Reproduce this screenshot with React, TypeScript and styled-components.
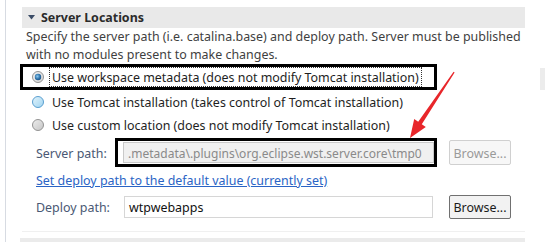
import React from 'react';
import styled, { createGlobalStyle } from 'styled-components';

const Global = createGlobalStyle`
  html, body { margin: 0; padding: 0; background: #fff; }
  body { font-family: "Noto Sans", "Open Sans", sans-serif; font-size: 12.45px; color: #222; }
  * { box-sizing: border-box; }
`;

const Page = styled.div`
  position: relative;
  width: 545px;
  height: 242px;
  overflow: hidden;
  display: flex;
  align-items: flex-start;
  background: #fff;
`;

const Gutter = styled.div`
  flex: none;
  width: 6px;
  height: 242px;
  border-right: 1px solid #d7dbe2;
`;

const Main = styled.div`
  flex: none;
  width: 519px;
  padding: 7px 0 0 16px;
  display: flex;
  flex-direction: column;
  & > * { flex: none; }
`;

const RightCol = styled.div`
  flex: 1;
  padding: 68px 0 0 15px;
`;

const SideBlock = styled.div`
  width: 5px;
  height: 22px;
  background: #ececec;
`;

const Header = styled.div`
  height: 21px;
  background: #e9e9e9;
  display: flex;
  align-items: center;
  gap: 6px;
  padding-left: 6px;
  font-weight: 700;
  color: #2b2b2b;
`;

const Description = styled.div`
  padding-left: 4px;
  line-height: 18px;
  color: #3f3f3f;
`;

const FocusFrame = styled.div`
  margin-left: -2px;
  width: 417px;
  height: 26px;
  border: 3px solid #000;
  display: flex;
  align-items: center;
  padding-left: 9px;
`;

const RadioRow = styled.div`
  height: 23px;
  display: flex;
  align-items: center;
  padding-left: 10px;
`;

const RadioLabel = styled.span<{ $focused?: boolean }>`
  margin-left: 5px;
  padding: 1px 2px 0;
  line-height: 17px;
  border: 1px dotted ${p => (p.$focused ? '#333' : 'transparent')};
  color: #1e1e1e;
  white-space: nowrap;
`;

const FieldRow = styled.div<{ $h: number; $mt?: number }>`
  height: ${p => p.$h}px;
  margin-top: ${p => p.$mt ?? 0}px;
  display: flex;
  align-items: center;
  padding-left: 14px;
`;

const FieldLabel = styled.span`
  width: 79px;
  flex: none;
  padding-top: 1px;
  color: #4a5874;
`;

const MarkFrame = styled.div`
  width: 322px;
  height: 29px;
  border: 3px solid #000;
  padding: 1px 0 1px 5px;
  display: flex;
`;

const TextBox = styled.div<{ $disabled?: boolean; $w?: number; $ml?: number }>`
  width: ${p => (p.$w ? `${p.$w}px` : '100%')};
  height: ${p => (p.$disabled ? '100%' : '22px')};
  margin-left: ${p => p.$ml ?? 0}px;
  border: 1px solid ${p => (p.$disabled ? '#c9c9c9' : '#d6d6d6')};
  background: ${p => (p.$disabled ? '#f0f0f0' : '#fff')};
  color: ${p => (p.$disabled ? '#8a8a8a' : '#111')};
  font-size: ${p => (p.$disabled ? '12px' : '12.45px')};
  display: flex;
  align-items: center;
  padding: 1px 0 0 4px;
  white-space: nowrap;
  overflow: hidden;
`;

const Button = styled.div<{ $disabled?: boolean; $ml: number }>`
  margin-left: ${p => p.$ml}px;
  width: 62px;
  height: ${p => (p.$disabled ? 25 : 24)}px;
  border: 1px solid ${p => (p.$disabled ? '#d0d0d0' : '#707070')};
  border-radius: 2px;
  background: ${p => (p.$disabled ? '#f7f7f7' : '#f2f2f2')};
  color: ${p => (p.$disabled ? '#9a9a9a' : '#1a1a1a')};
  display: flex;
  align-items: center;
  justify-content: center;
  padding-top: 1px;
`;

const LinkRow = styled.div`
  height: 20px;
  margin-top: 3px;
  display: flex;
  align-items: center;
  padding: 1px 0 0 14px;
`;

const Link = styled.a`
  color: #2a64c5;
  text-decoration: underline;
  cursor: pointer;
`;

const Divider = styled.div`
  margin-top: 11px;
  height: 1px;
  background: #f0f0f0;
`;

const FooterBand = styled.div`
  margin: 6px 0 0 -2px;
  height: 10px;
  background: #ebebeb;
`;

const ArrowOverlay = styled.svg`
  position: absolute;
  left: 0;
  top: 0;
  pointer-events: none;
`;

type RadioKind = 'selected' | 'hover' | 'plain';

const Radio: React.FC<{ kind: RadioKind }> = ({ kind }) => (
  <svg width="12" height="12" viewBox="0 0 12 12" style={{ flex: 'none' }}>
    <defs>
      <linearGradient id={`rg-${kind}`} x1="0" y1="0" x2="1" y2="1">
        {kind === 'hover' ? (
          <>
            <stop offset="0" stopColor="#e3f4fc" />
            <stop offset="1" stopColor="#9fd3f0" />
          </>
        ) : kind === 'plain' ? (
          <>
            <stop offset="0" stopColor="#eeeeee" />
            <stop offset="1" stopColor="#c4c4c4" />
          </>
        ) : (
          <>
            <stop offset="0" stopColor="#f4f4f4" />
            <stop offset="1" stopColor="#d4d4d4" />
          </>
        )}
      </linearGradient>
      <radialGradient id="dot" cx="0.4" cy="0.4" r="0.7">
        <stop offset="0" stopColor="#8cc8ee" />
        <stop offset="0.6" stopColor="#2a6fa8" />
        <stop offset="1" stopColor="#1d4b78" />
      </radialGradient>
    </defs>
    <circle
      cx="6"
      cy="6"
      r="5.5"
      fill={`url(#rg-${kind})`}
      stroke={kind === 'hover' ? '#5a9fcf' : '#939393'}
      strokeWidth="1"
    />
    {kind === 'selected' && <circle cx="6" cy="6" r="3.2" fill="url(#dot)" />}
  </svg>
);

const Triangle = () => (
  <svg width="7" height="5" viewBox="0 0 7 5">
    <path d="M0 0 L7 0 L3.5 4.5 Z" fill="#3b4c66" />
  </svg>
);

export default function App() {
  return (
    <>
      <Global />
      <Page>
        <Gutter />
        <Main>
          <Header>
            <Triangle />
            <span>Server Locations</span>
          </Header>
          <Description>
            Specify the server path (i.e. catalina.base) and deploy path. Server must be published
            <br />
            with no modules present to make changes.
          </Description>
          <FocusFrame>
            <Radio kind="selected" />
            <RadioLabel $focused>Use workspace metadata (does not modify Tomcat installation)</RadioLabel>
          </FocusFrame>
          <RadioRow>
            <Radio kind="hover" />
            <RadioLabel>Use Tomcat installation (takes control of Tomcat installation)</RadioLabel>
          </RadioRow>
          <RadioRow>
            <Radio kind="plain" />
            <RadioLabel>Use custom location (does not modify Tomcat installation)</RadioLabel>
          </RadioRow>
          <FieldRow $h={29} $mt={2}>
            <FieldLabel>Server path:</FieldLabel>
            <MarkFrame>
              <TextBox $disabled>.metadata\.plugins\org.eclipse.wst.server.core\tmp0</TextBox>
            </MarkFrame>
            <Button $disabled $ml={12}>Browse...</Button>
          </FieldRow>
          <LinkRow>
            <Link>Set deploy path to the default value (currently set)</Link>
          </LinkRow>
          <FieldRow $h={26} $mt={4}>
            <FieldLabel>Deploy path:</FieldLabel>
            <TextBox $w={309} $ml={9}>wtpwebapps</TextBox>
            <Button $ml={16}>Browse...</Button>
          </FieldRow>
          <Divider />
          <FooterBand />
        </Main>
        <RightCol>
          <SideBlock />
        </RightCol>
        <ArrowOverlay width="545" height="242" viewBox="0 0 545 242">
          <polygon
            points="454.6,72.4 421.8,124.2 425.8,126.9 410,138 414.2,119.1 418.2,121.8 453.6,71.7"
            fill="#e8262a"
          />
        </ArrowOverlay>
      </Page>
    </>
  );
}
